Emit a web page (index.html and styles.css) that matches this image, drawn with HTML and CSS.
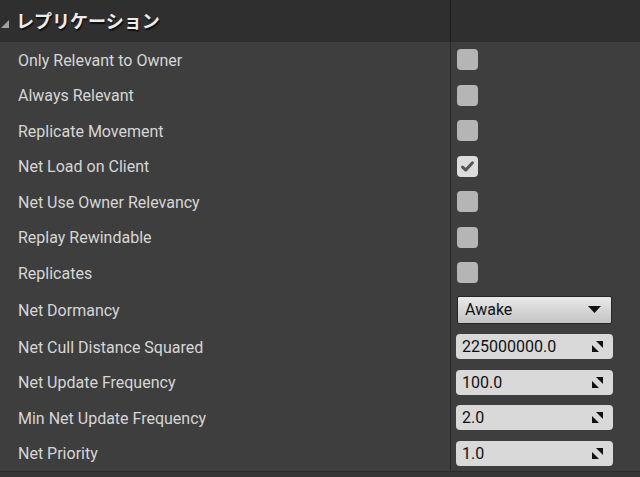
FILE: index.html
```html
<!DOCTYPE html>
<html lang="ja">
<head>
<meta charset="utf-8">
<link rel="stylesheet" href="styles.css">
</head>
<body>
<div class="panel">
  <div class="header">
    <div class="header-title">
      <svg class="tri" width="8" height="8" viewBox="0 0 8 8"><polygon points="8,0 8,8 0,8" fill="#a0a0a0"/></svg>
      <span class="title">レプリケーション</span>
    </div>
    <div class="header-right"></div>
  </div>
  <div class="rows">
    <div class="row"><div class="label">Only Relevant to Owner</div><div class="value"><span class="check"></span></div></div>
    <div class="row"><div class="label">Always Relevant</div><div class="value"><span class="check"></span></div></div>
    <div class="row"><div class="label">Replicate Movement</div><div class="value"><span class="check"></span></div></div>
    <div class="row"><div class="label">Net Load on Client</div><div class="value"><span class="check checked"><svg width="15" height="13" viewBox="0 0 15 13"><path d="M2.5 7.2 L5.8 10 L12.5 2.8" fill="none" stroke="#555" stroke-width="3" stroke-linecap="round" stroke-linejoin="round"/></svg></span></div></div>
    <div class="row"><div class="label">Net Use Owner Relevancy</div><div class="value"><span class="check"></span></div></div>
    <div class="row"><div class="label">Replay Rewindable</div><div class="value"><span class="check"></span></div></div>
    <div class="row"><div class="label">Replicates</div><div class="value"><span class="check"></span></div></div>
    <div class="row row-tall"><div class="label">Net Dormancy</div><div class="value"><div class="dropdown"><span>Awake</span><svg width="13" height="7" viewBox="0 0 13 7"><polygon points="0,0 13,0 6.5,7" fill="#111"/></svg></div></div></div>
    <div class="row"><div class="label">Net Cull Distance Squared</div><div class="value"><div class="field"><span>225000000.0</span><svg class="arrows" width="11" height="11" viewBox="0 0 11 11"><polygon points="4,0 11,0 11,7" fill="#111"/><polygon points="0,4 0,11 7,11" fill="#111"/></svg></div></div></div>
    <div class="row"><div class="label">Net Update Frequency</div><div class="value"><div class="field"><span>100.0</span><svg class="arrows" width="11" height="11" viewBox="0 0 11 11"><polygon points="4,0 11,0 11,7" fill="#111"/><polygon points="0,4 0,11 7,11" fill="#111"/></svg></div></div></div>
    <div class="row"><div class="label">Min Net Update Frequency</div><div class="value"><div class="field"><span>2.0</span><svg class="arrows" width="11" height="11" viewBox="0 0 11 11"><polygon points="4,0 11,0 11,7" fill="#111"/><polygon points="0,4 0,11 7,11" fill="#111"/></svg></div></div></div>
    <div class="row"><div class="label">Net Priority</div><div class="value"><div class="field"><span>1.0</span><svg class="arrows" width="11" height="11" viewBox="0 0 11 11"><polygon points="4,0 11,0 11,7" fill="#111"/><polygon points="0,4 0,11 7,11" fill="#111"/></svg></div></div></div>
  </div>
  <div class="footer"></div>
</div>
</body>
</html>
```

FILE: styles.css
```css
html, body {
  margin: 0;
  padding: 0;
  background: #363636;
}
body {
  width: 640px;
  height: 477px;
  overflow: hidden;
  font-family: Roboto, "Noto Sans CJK JP", sans-serif;
}
.panel {
  display: flex;
  flex-direction: column;
}
.header {
  display: grid;
  grid-template-columns: 450px 1fr;
  height: 42px;
  background: #2f2f2f;
}
.header-title {
  display: flex;
  align-items: center;
  padding-left: 1px;
  gap: 7px;
}
.tri {
  margin-top: 5px;
}
.title {
  font-family: "Noto Sans CJK JP", sans-serif;
  font-weight: 700;
  font-size: 18px;
  color: #ececec;
  text-shadow: 1px 2px 1px #111;
  margin-top: -2px;
}
.header-right {
  border-left: 1px solid #1e1e1e;
}
.rows {
  background: #3e3e3e;
  display: flex;
  flex-direction: column;
}
.row {
  display: grid;
  grid-template-columns: 450px 1fr;
  height: 35.5px;
}
.row-tall {
  height: 38.5px;
}
.label {
  display: flex;
  align-items: center;
  padding-left: 18px;
  padding-top: 1px;
  font-size: 16px;
  color: #d6d6d6;
}
.value {
  display: flex;
  align-items: center;
  border-left: 1px solid #262626;
  padding-left: 6px;
}
.check {
  width: 21px;
  height: 21px;
  border-radius: 4px;
  background: #b5b5b5;
  display: flex;
  align-items: center;
  justify-content: center;
}
.check.checked {
  background: #dcdcdc;
}
.dropdown {
  height: 26px;
  border: 1px solid #262626;
  border-radius: 2px;
  background: linear-gradient(#e9e9e9, #c4c4c4);
  display: flex;
  align-items: center;
  justify-content: space-between;
  padding: 0 10px 0 7px;
  box-sizing: content-box;
  width: 136px;
  font-size: 16px;
  color: #111;
}
.field {
  width: 157px;
  height: 25px;
  box-sizing: border-box;
  border-radius: 4px;
  background: #d9d9d9;
  display: flex;
  align-items: center;
  justify-content: space-between;
  padding: 0 10px 0 6px;
  font-size: 16px;
  color: #111;
  margin-left: -1px;
}
.footer {
  border-top: 1px solid #2c2c2c;
  height: 6px;
  background: #363636;
}
```
